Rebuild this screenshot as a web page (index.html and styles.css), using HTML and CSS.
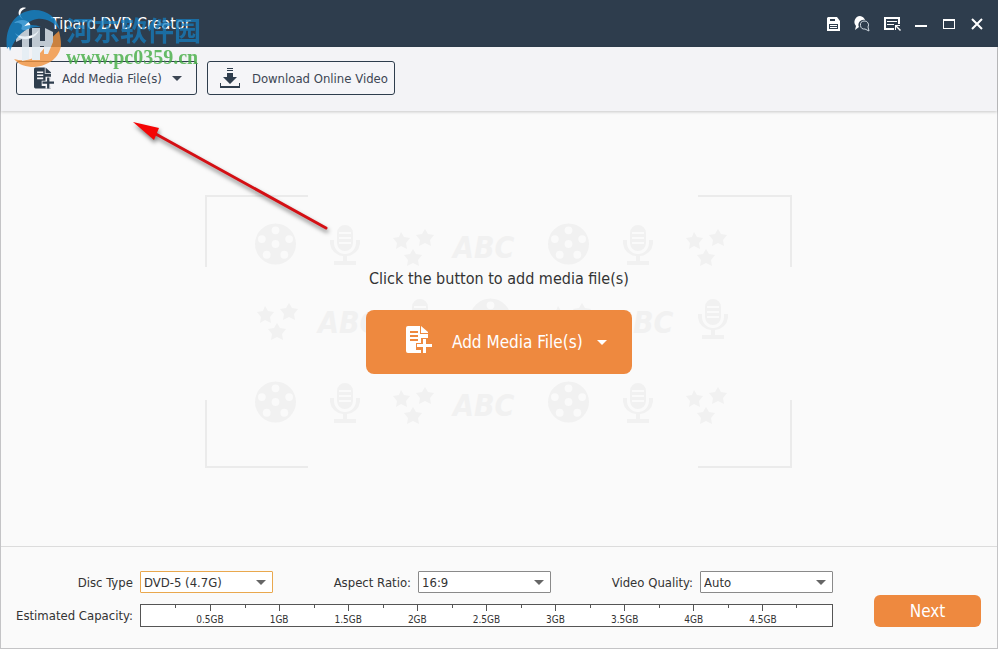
FILE: index.html
```
<!DOCTYPE html>
<html lang="en">
  <head>
    <meta charset="UTF-8" />
    <meta name="viewport" content="width=device-width, initial-scale=1" />
    <title>Tipard DVD Creator</title>
    <link rel="stylesheet" href="styles.css" />
  </head>
  <body>
    <!-- Shared shapes -->
    <svg class="sprite" aria-hidden="true">
      <symbol id="file-add" viewBox="0 0 26 27">
        <path d="M2 0h12v8h8v19H2a2 2 0 0 1-2-2V2a2 2 0 0 1 2-2z" />
        <path d="M15 0l7 6v1h-7z" />
        <path class="cut" d="M4 5h8v2H4zM4 9h8v2H4zM4 13h8v2H4z" />
        <path class="cut" d="M15 12h7v4h4v8h-4v3h-7v-3h-5v-7h5z" />
        <path d="M17 13h3v5h6v3h-6v6h-3v-6h-6v-3h6z" />
      </symbol>
      <symbol id="reel" viewBox="0 0 42 42">
        <path fill-rule="evenodd" d="M21 0a21 21 0 1 1 0 42a21 21 0 0 1 0-42z
          M21 3a4 4 0 1 0 0 8a4 4 0 0 0 0-8z
          M7 12a4 4 0 1 0 0 8a4 4 0 0 0 0-8z
          M35 12a4 4 0 1 0 0 8a4 4 0 0 0 0-8z
          M21 17a4 4 0 1 0 0 8a4 4 0 0 0 0-8z
          M12 28a4 4 0 1 0 0 8a4 4 0 0 0 0-8z
          M30 28a4 4 0 1 0 0 8a4 4 0 0 0 0-8z" />
      </symbol>
      <symbol id="mic" viewBox="0 0 30 42">
        <path fill-rule="evenodd" d="M15 1a8 8 0 0 1 8 8v10a8 8 0 0 1-16 0V9a8 8 0 0 1 8-8z
          M9 8v2h12V8z M9 13v2h12v-2z M9 18v2h12v-2z" />
        <path d="M0 16h4v3a11 11 0 0 0 22 0v-3h4v4a14 14 0 0 1-13 12v5h9v4H4v-4h9v-5A14 14 0 0 1 0 20z" />
      </symbol>
      <symbol id="stars" viewBox="0 0 42 42">
        <path d="M8 7l3 5 6 1-4 5 1 6-6-3-5 3 1-6-4-5 6-1z" />
        <path d="M32 4l3 5 6 1-4 5 1 6-6-3-6 3 1-6-4-5 6-1z" />
        <path d="M20 24l3 5 6 1-4 5 1 6-6-3-6 3 1-6-4-5 6-1z" />
      </symbol>
    </svg>

    <div class="window">
      <header class="titlebar">
        <svg class="logo" viewBox="0 0 32 34" aria-hidden="true">
          <path d="M14 1c-7 3-7 8-2 12C7 10 5 6 8 2c1-1 4-2 6-1z" />
          <path d="M2 16c6-5 14-3 16 1s-3 7-7 6 1-4-2-6-5-1-7-1z" />
          <path d="M3 26c5 5 18 5 24-3-3 10-19 13-24 3z" />
        </svg>
        <h1>Tipard DVD Creator</h1>

        <div class="tools">
          <button class="tool" aria-label="Register">
            <svg width="14" height="14" viewBox="0 0 14 14">
              <path fill-rule="evenodd" d="M1 0h9l3 4v10H0V1zM3 2v2h5V2zM2 7v5h9V7z" />
              <path d="M3 8h7v1H3zM3 10h7v1H3z" />
            </svg>
          </button>
          <button class="tool" aria-label="Feedback">
            <svg width="16" height="16" viewBox="0 0 16 16">
              <path d="M6 0a6 6 0 0 1 5 4a5 5 0 0 0-6 7l-4 3 1-4A6 6 0 0 1 6 0z" />
              <path d="M10 5a4 4 0 0 1 4 6l1 4-4-2a4 4 0 1 1-1-8z" fill="none" stroke="#cfd8e0" />
            </svg>
          </button>
        </div>
        <div class="tools">
          <button class="tool" aria-label="Menu">
            <svg width="18" height="16" viewBox="0 0 18 16">
              <path d="M10 13H1V2h14v6" fill="none" stroke="#fff" stroke-width="2" />
              <path d="M3 5h10v1H3zM3 8h7v1H3zM11 9h5v1h-3l4 4-1 1-4-4v3h-1z" />
            </svg>
          </button>
          <button class="tool" aria-label="Minimize">
            <svg width="12" height="12" viewBox="0 0 12 12"><path d="M0 7h12v2H0z" /></svg>
          </button>
          <button class="tool" aria-label="Maximize">
            <svg width="12" height="10" viewBox="0 0 12 10">
              <path fill-rule="evenodd" d="M0 0h12v10H0zM1 2v7h10V2z" />
            </svg>
          </button>
          <button class="tool" aria-label="Close">
            <svg width="12" height="12" viewBox="0 0 12 12">
              <path d="M1 1l10 10M11 1L1 11" stroke="#fff" stroke-width="2" />
            </svg>
          </button>
        </div>
      </header>

      <div class="toolbar">
        <button class="tool-button">
          <svg width="20" height="22"><use href="#file-add" /></svg>
          <span>Add Media File(s)</span>
          <span class="caret"></span>
        </button>
        <button class="tool-button download">
          <svg width="20" height="20" viewBox="0 0 20 20">
            <path d="M7 0h6v1H7zM7 2h6v1H7zM7 5h6v4h4l-7 7-7-7h4zM0 15h1v3h18v-3h1v5H0z" />
          </svg>
          <span>Download Online Video</span>
        </button>
      </div>

      <main class="stage">
        <div class="drop-area">
          <svg class="pattern" viewBox="0 0 587 273" aria-hidden="true">
            <path class="corners" d="M1 72V1H103M493 1H586V72M586 205V272H493M103 272H1V205" />
            <use href="#reel" x="50" y="28" width="41" height="42" />
            <use href="#mic" x="125" y="29" width="30" height="42" />
            <use href="#stars" x="188" y="30" width="42" height="42" />
            <text x="248" y="63">ABC</text>
            <use href="#reel" x="343" y="28" width="41" height="42" />
            <use href="#mic" x="418" y="29" width="30" height="42" />
            <use href="#stars" x="481" y="30" width="42" height="42" />

            <use href="#stars" x="52" y="104" width="42" height="42" />
            <text x="113" y="138">ABC</text>
            <use href="#mic" x="200" y="103" width="30" height="42" />
            <use href="#reel" x="265" y="103" width="41" height="42" />
            <use href="#stars" x="345" y="104" width="42" height="42" />
            <text x="407" y="138">ABC</text>
            <use href="#mic" x="493" y="103" width="30" height="42" />

            <use href="#reel" x="50" y="186" width="41" height="42" />
            <use href="#mic" x="125" y="187" width="30" height="42" />
            <use href="#stars" x="188" y="188" width="42" height="42" />
            <text x="248" y="221">ABC</text>
            <use href="#reel" x="343" y="186" width="41" height="42" />
            <use href="#mic" x="418" y="187" width="30" height="42" />
            <use href="#stars" x="481" y="188" width="42" height="42" />
          </svg>
          <p>Click the button to add media file(s)</p>
          <button class="add-button">
            <svg width="26" height="27"><use href="#file-add" /></svg>
            <span>Add Media File(s)</span>
            <span class="caret"></span>
          </button>
        </div>

        <svg class="arrow" width="210" height="125" viewBox="0 0 210 125" aria-hidden="true">
          <path d="M24 21L196 116" stroke="#d40f14" stroke-width="3" stroke-linecap="round" />
          <path d="M3 10L29 16L24 28Z" fill="#f40505" />
        </svg>
      </main>

      <footer class="settings">
        <label for="disc">Disc Type</label>
        <div class="fields">
          <div class="select active">
            <select id="disc"><option>DVD-5 (4.7G)</option></select>
          </div>
          <div class="field">
            <label for="ratio">Aspect Ratio:</label>
            <div class="select">
              <select id="ratio"><option>16:9</option></select>
            </div>
          </div>
          <div class="field">
            <label for="quality">Video Quality:</label>
            <div class="select">
              <select id="quality"><option>Auto</option></select>
            </div>
          </div>
        </div>

        <span class="capacity">Estimated Capacity:</span>
        <div class="ruler">
          <span>0.5GB</span>
          <span>1GB</span>
          <span>1.5GB</span>
          <span>2GB</span>
          <span>2.5GB</span>
          <span>3GB</span>
          <span>3.5GB</span>
          <span>4GB</span>
          <span>4.5GB</span>
        </div>
        <button class="next">Next</button>
      </footer>

      <div class="watermark">
        <svg width="56" height="60" viewBox="0 0 56 60" aria-hidden="true">
          <path d="M1 40C-2 18 10 2 28 1c14 0 23 8 26 20-7-9-15-12-23-11C18 12 14 24 1 40z" fill="#1583c7" />
          <path d="M55 36c-1 12-12 21-27 22-8 0-15-2-20-8 10 3 20 1 27-7 6-6 7-12 18-21 1 4 2 9 2 14z" fill="#f2923c" />
          <path d="M10 27l13-8v31l-7 2V30l-6 3zM26 19h8v13h5V19l8 4v10l-5 12h-4v-8h-4v14h-8z" fill="#e4edf4" />
          <path d="M1 30c8-13 24-17 34-12-12-1-23 4-31 24z" fill="#1583c7" />
        </svg>
        <div>
          <strong lang="zh">河东软件园</strong>
          <em>www.pc0359.cn</em>
        </div>
      </div>
    </div>
  </body>
</html>
```
FILE: styles.css
```
* {
  box-sizing: border-box;
}

body {
  margin: 0;
  font-family: "DejaVu Sans Condensed", "DejaVu Sans", Tahoma, sans-serif;
  font-size: 13px;
  color: #333;
}

button,
select {
  font: inherit;
  color: inherit;
}

button {
  cursor: pointer;
}

svg {
  display: block;
  flex: none;
}

.sprite {
  position: absolute;
  width: 0;
  height: 0;
}

.cut {
  fill: var(--cut);
}

.window {
  position: relative;
  display: flex;
  flex-direction: column;
  min-height: 100vh;
  background: #fafafa;
  border: 1px solid #c4c4c6;
  border-top: none;
}

/* Title bar */
.titlebar {
  display: flex;
  align-items: center;
  height: 47px;
  margin: 0 -1px;
  padding: 0 7px 0 12px;
  background: #2e3d4d;
  color: #fff;
}

.titlebar h1 {
  flex: 1;
  margin: 0 0 0 7px;
  font-size: 16px;
  font-weight: normal;
}

.logo {
  width: 32px;
  height: 34px;
  fill: #fff;
}

.tools {
  display: flex;
  margin-left: 3px;
}

.tool {
  display: flex;
  align-items: center;
  justify-content: center;
  width: 28px;
  height: 28px;
  padding: 0;
  border: none;
  background: none;
}

.tool svg {
  fill: #fff;
}

/* Toolbar */
.toolbar {
  display: flex;
  gap: 10px;
  padding: 14px 15px 16px;
  background: #f3f3f6;
  box-shadow: 0 1px 3px rgba(0, 0, 0, 0.2);
}

.tool-button {
  --cut: #f5f5f8;
  display: flex;
  align-items: center;
  gap: 8px;
  height: 34px;
  padding: 0 14px 0 17px;
  border: 1px solid #2e3d4d;
  border-radius: 3px;
  background: #f5f5f8;
  color: #3d4654;
}

.tool-button svg {
  fill: #2e3d4d;
}

.tool-button .caret {
  margin-left: 2px;
}

.download {
  gap: 12px;
  padding: 0 6px 0 12px;
}

.caret {
  border: 5px solid transparent;
  border-top-color: currentColor;
  border-bottom: none;
}

/* Empty state */
.stage {
  position: relative;
  flex: 1;
  display: flex;
  align-items: center;
  justify-content: center;
  padding: 6px 1px 0 0;
}

.drop-area {
  position: relative;
  display: flex;
  flex-direction: column;
  align-items: center;
  gap: 21px;
  padding: 74px 160px 94px 161px;
}

.drop-area p {
  margin: 0;
  font-size: 16px;
  line-height: 20px;
}

.pattern {
  position: absolute;
  inset: 0;
  width: 100%;
  height: 100%;
  fill: #f1f1f1;
}

.pattern text {
  font-size: 30px;
  font-style: italic;
  font-weight: bold;
}

.corners {
  fill: none;
  stroke: #ebebeb;
  stroke-width: 2;
}

.drop-area p,
.add-button {
  position: relative;
}

.add-button {
  --cut: #ee893f;
  display: flex;
  align-items: center;
  gap: 20px;
  width: 266px;
  height: 64px;
  padding: 0 0 0 40px;
  border: none;
  border-radius: 8px;
  background: #ee893f;
  color: #fff;
  font-size: 17px;
}

.add-button svg {
  margin-bottom: 5px;
  fill: #fff;
}

.add-button .caret {
  margin-left: -6px;
}

.arrow {
  position: absolute;
  left: 129px;
  top: 1px;
  filter: drop-shadow(1px 3px 2px rgba(0, 0, 0, 0.5));
}

/* Output settings */
.settings {
  display: grid;
  grid-template-columns: auto 1fr 107px;
  gap: 11px 7px;
  align-items: center;
  padding: 24px 16px 21px 15px;
  border-top: 1px solid #dcdcdc;
}

.settings > label,
.capacity {
  text-align: right;
}

.fields {
  display: flex;
  justify-content: space-between;
  margin-right: 34px;
}

.field {
  display: flex;
  align-items: center;
  gap: 7px;
}

.select {
  position: relative;
  width: 133px;
}

.select::after {
  content: "";
  position: absolute;
  right: 7px;
  top: 9px;
  border: 5px solid transparent;
  border-top-color: #666;
  border-bottom: none;
  pointer-events: none;
}

.select select {
  display: block;
  appearance: none;
  width: 100%;
  height: 22px;
  padding: 0 3px;
  border: 1px solid #8a8a8a;
  border-radius: 1px;
  background: #fff;
}

.active select {
  border-color: #e9a84e;
}

/* Half a step is left free at each end */
.ruler {
  display: grid;
  grid-template-columns: 1fr repeat(9, 2fr) 1fr;
  height: 23px;
  margin-right: 34px;
  border: 1px solid #555;
  background: #fff;
  font-size: 10px;
}

.ruler span {
  padding-top: 9px;
  line-height: 12px;
  text-align: center;
  background:
    linear-gradient(#555, #555) left top / 1px 3px no-repeat,
    linear-gradient(#555, #555) center top / 1px 6px no-repeat;
}

.ruler span:first-child {
  grid-column-start: 2;
}

.ruler span:last-child {
  background:
    linear-gradient(#555, #555) left top / 1px 3px no-repeat,
    linear-gradient(#555, #555) right top / 1px 3px no-repeat,
    linear-gradient(#555, #555) center top / 1px 6px no-repeat;
}

.next {
  grid-column: 3;
  grid-row: 1 / 3;
  align-self: end;
  height: 32px;
  border: none;
  border-radius: 6px;
  background: #ee893f;
  color: #fff;
  font-size: 17px;
}

/* Site watermark over the top left corner */
.watermark {
  position: absolute;
  left: 5px;
  top: 9px;
  display: flex;
  gap: 4px;
  opacity: 0.8;
  pointer-events: none;
}

.watermark strong,
.watermark em {
  display: block;
  font-style: normal;
  font-weight: bold;
}

.watermark strong {
  padding-top: 4px;
  color: #1580c4;
  font-family: "Noto Sans CJK SC", sans-serif;
  font-size: 27px;
  line-height: 34px;
  opacity: 0.9;
}

.watermark em {
  color: #43ad43;
  font-family: "Liberation Serif", serif;
  font-size: 20px;
  line-height: 20px;
}
```
